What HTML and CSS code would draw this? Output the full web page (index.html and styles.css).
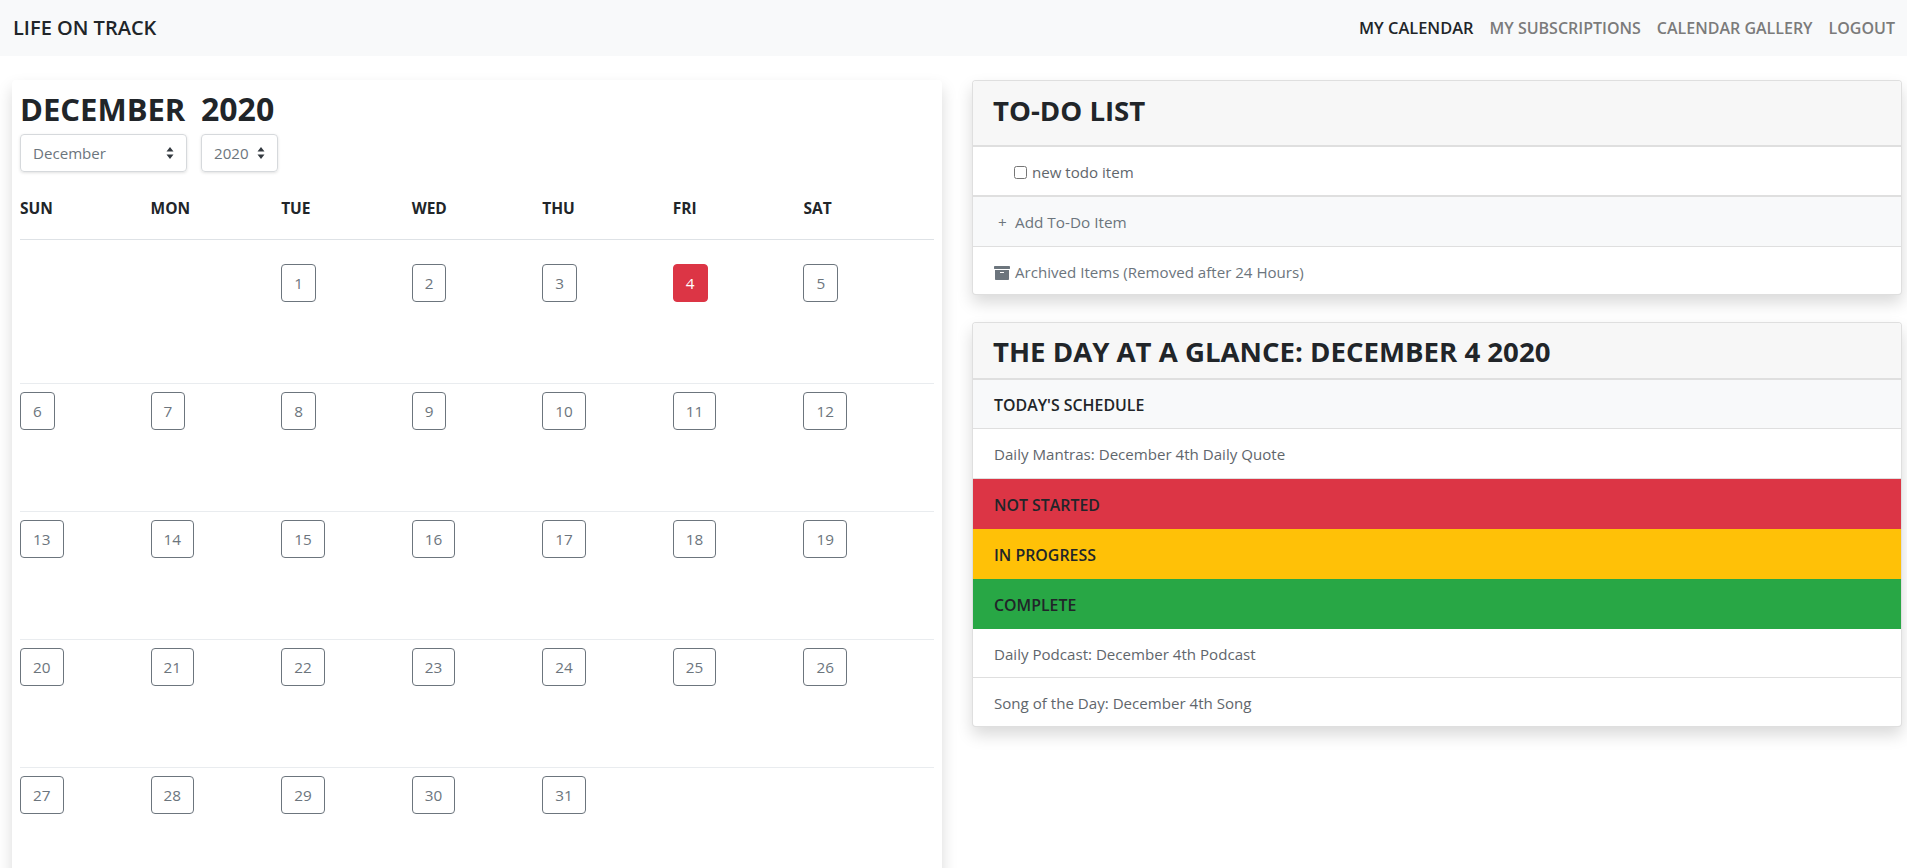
FILE: index.html
```html
<!DOCTYPE html>
<html lang="en">
<head>
<meta charset="utf-8">
<title>Life On Track</title>
<link rel="stylesheet" href="styles.css">
</head>
<body>
<nav class="navbar">
  <a class="brand">LIFE ON TRACK</a>
  <div class="nav-links">
    <a class="nav-link active">MY CALENDAR</a>
    <a class="nav-link">MY SUBSCRIPTIONS</a>
    <a class="nav-link">CALENDAR GALLERY</a>
    <a class="nav-link">LOGOUT</a>
  </div>
</nav>
<main class="main">
  <section class="calendar">
    <div class="cal-title"><h1 class="month">DECEMBER</h1><h1 class="year">2020</h1></div>
    <div class="selects">
      <div class="select select-month"><span>December</span><svg class="carets" viewBox="0 0 8 12"><path d="M4 0 7.5 4.5H.5zM4 12 .5 7.5h7z"/></svg></div>
      <div class="select select-year"><span>2020</span><svg class="carets" viewBox="0 0 8 12"><path d="M4 0 7.5 4.5H.5zM4 12 .5 7.5h7z"/></svg></div>
    </div>
    <div class="week week-head">
      <div>SUN</div><div>MON</div><div>TUE</div><div>WED</div><div>THU</div><div>FRI</div><div>SAT</div>
    </div>
    <div class="week week-first">
      <div></div><div></div>
      <div><a class="day">1</a></div><div><a class="day">2</a></div><div><a class="day">3</a></div><div><a class="day today">4</a></div><div><a class="day">5</a></div>
    </div>
    <div class="week">
      <div><a class="day">6</a></div><div><a class="day">7</a></div><div><a class="day">8</a></div><div><a class="day">9</a></div><div><a class="day">10</a></div><div><a class="day">11</a></div><div><a class="day">12</a></div>
    </div>
    <div class="week">
      <div><a class="day">13</a></div><div><a class="day">14</a></div><div><a class="day">15</a></div><div><a class="day">16</a></div><div><a class="day">17</a></div><div><a class="day">18</a></div><div><a class="day">19</a></div>
    </div>
    <div class="week">
      <div><a class="day">20</a></div><div><a class="day">21</a></div><div><a class="day">22</a></div><div><a class="day">23</a></div><div><a class="day">24</a></div><div><a class="day">25</a></div><div><a class="day">26</a></div>
    </div>
    <div class="week">
      <div><a class="day">27</a></div><div><a class="day">28</a></div><div><a class="day">29</a></div><div><a class="day">30</a></div><div><a class="day">31</a></div><div></div><div></div>
    </div>
  </section>
  <aside class="side">
    <section class="card">
      <h2 class="card-head">TO-DO LIST</h2>
      <label class="item todo"><input class="check" type="checkbox"><span>new todo item</span></label>
      <div class="item add"><span class="plus">+</span><span>Add To-Do Item</span></div>
      <div class="item archived">
        <svg class="archive" viewBox="0 0 512 512"><path d="M32 448c0 17.7 14.3 32 32 32h384c17.7 0 32-14.3 32-32V160H32v288zm160-212c0-6.6 5.4-12 12-12h104c6.6 0 12 5.4 12 12v8c0 6.6-5.4 12-12 12H204c-6.6 0-12-5.4-12-12v-8zM480 32H32C14.3 32 0 46.3 0 64v48c0 8.8 7.2 16 16 16h480c8.8 0 16-7.2 16-16V64c0-17.7-14.3-32-32-32z"/></svg>
        <span>Archived Items (Removed after 24 Hours)</span>
      </div>
    </section>
    <section class="card">
      <h2 class="card-head card-head-day">THE DAY AT A GLANCE: DECEMBER 4 2020</h2>
      <div class="item strong light">TODAY'S SCHEDULE</div>
      <div class="item plain">Daily Mantras: December 4th Daily Quote</div>
      <div class="item strong red">NOT STARTED</div>
      <div class="item strong yellow">IN PROGRESS</div>
      <div class="item strong green">COMPLETE</div>
      <div class="item plain podcast">Daily Podcast: December 4th Podcast</div>
      <div class="item plain last">Song of the Day: December 4th Song</div>
    </section>
  </aside>
</main>
</body>
</html>
```
FILE: styles.css
```css
* { box-sizing: border-box; }
html, body { margin: 0; height: 100%; overflow: hidden; }
body {
  background: #fff;
  color: #212529;
  font-family: "Open Sans", "Noto Sans", sans-serif;
  font-size: 15.1px;
  line-height: 24px;
}
h1, h2 { margin: 0; }

.navbar {
  height: 56px;
  background: #f8f9fa;
  display: flex;
  align-items: center;
  justify-content: space-between;
  padding: 0 4px 0 13px;
}
.brand { font-size: 20px; font-weight: 600; color: #212529; }
.nav-links { display: flex; }
.nav-link { padding: 0 8px; font-size: 16px; font-weight: 600; color: #7b7b7b; }
.nav-link.active { color: #212529; font-size: 16.4px; }

.main {
  display: grid;
  grid-template-columns: 930px 930px;
  column-gap: 30px;
  padding: 24px 0 0 12px;
}

.calendar {
  height: 900px;
  padding: 8px;
  background: #fff;
  border-radius: 4px;
  box-shadow: 0 8px 16px rgba(0,0,0,.15);
}
.cal-title { display: flex; height: 46px; }
.month, .year { font-size: 32px; line-height: 42px; font-weight: 700; }
.month { width: 181px; font-size: 31px; }
.selects { display: flex; gap: 14px; }
.select {
  height: 38px;
  padding: 0 12px;
  display: flex;
  align-items: center;
  justify-content: space-between;
  color: #6c757d;
  border: 1px solid #d6d9dc;
  border-radius: 4px;
  box-shadow: 0 1px 3px rgba(0,0,0,.12);
}
.select-month { width: 167px; }
.select-year { width: 77px; }
.carets { width: 8px; height: 12px; fill: #343a40; }

.week {
  display: grid;
  grid-template-columns: repeat(7, 1fr);
  height: 128px;
  padding-top: 8px;
  border-bottom: 1px solid #e9ecef;
}
.week:last-child { border-bottom: 0; }
.week-head {
  height: 68px;
  padding-top: 24px;
  font-weight: 700;
  font-size: 15.5px;
  border-bottom: 1px solid #dee2e6;
}
.week-first { height: 144px; padding-top: 24px; }

.day {
  display: inline-block;
  height: 38px;
  padding: 6px 12px;
  font-size: 15.3px;
  color: #6c757d;
  border: 1px solid #6c757d;
  border-radius: 4px;
}
.day.today { color: #fff; background: #dc3545; border-color: #dc3545; }

.side { display: flex; flex-direction: column; gap: 27px; }
.card {
  background: #fff;
  border: 1px solid rgba(0,0,0,.125);
  border-radius: 4px;
  box-shadow: 0 8px 16px rgba(0,0,0,.15);
  overflow: hidden;
}
.card-head {
  height: 66px;
  padding: 0 20px 6px;
  display: flex;
  align-items: center;
  font-size: 27.6px;
  font-weight: 700;
  background: #f7f7f7;
  border-bottom: 2px solid #dfdfdf;
}
.card-head-day { height: 57px; padding-bottom: 0; }

.item {
  height: 50px;
  display: flex;
  align-items: center;
  padding: 1px 21px 0;
  color: #5f666c;
  border-bottom: 1px solid #dfdfdf;
}
.todo { padding: 2px 0 0 41px; border-bottom-width: 2px; }
.check { width: 13px; height: 13px; margin: 0 5px 0 0; }
.add { background: #f8f9fa; color: #6c757d; font-size: 15.3px; }
.plus { width: 21px; padding-left: 4px; }
.archived { color: #6c757d; border-bottom: 0; height: 47px; padding-top: 2px; }
.archive { width: 16px; height: 16px; margin: 2px 5px 0 0; fill: #6c757d; }
.strong { color: #212529; font-weight: 600; font-size: 15.9px; }
.light { background: #f8f9fa; height: 49px; }
.plain { height: 50px; }
.red { background: #dc3545; border: 0; }
.yellow { background: #ffc107; border: 0; }
.green { background: #28a745; border: 0; }
.podcast { height: 49px; }
.last { border-bottom: 0; height: 48px; }
```
